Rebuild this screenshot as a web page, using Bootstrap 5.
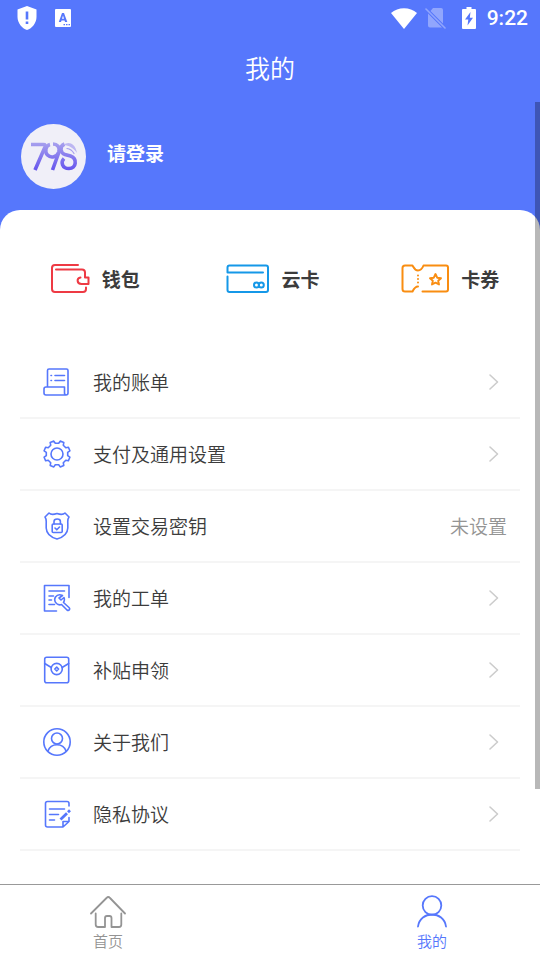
<!DOCTYPE html>
<html lang="zh-CN">
<head>
<meta charset="utf-8">
<meta name="viewport" content="width=device-width, initial-scale=1">
<title>我的</title>
<link href="https://cdn.jsdelivr.net/npm/bootstrap@5.3.0/dist/css/bootstrap.min.css" rel="stylesheet">
<style>
  :root { --brand: #5677fc; --ink: #3c3c3c; --muted-ink: #949494; }
  body { font-family: "Noto Sans CJK SC", sans-serif; color: var(--ink); background: #fff; }
  svg { display: block; flex: none; fill: none; stroke: currentColor; stroke-linecap: round; stroke-linejoin: round; }
  svg .solid { fill: currentColor; stroke: none; }
  a { color: inherit; text-decoration: none; }
  .brand-area { background: var(--brand); color: #fff; }
  .status-bar { height: 36px; padding: 0 12px 0 17px; }
  .clock { font: 500 21px/36px Roboto, sans-serif; margin-left: 11px; }
  .page-title { font-size: 25px; line-height: 62px; font-weight: 350; }
  .profile { padding: 26px 21px 41px; gap: 21px; }
  .sign-in { font-size: 19px; line-height: 28px; margin-bottom: 8px; }
  .sheet { margin-top: -20px; border-radius: 20px 20px 0 0; background: #fff; }
  .shortcuts { padding: 52px 0 52px 1px; }
  .shortcut { gap: 12px; font-size: 19px; line-height: 33px; }
  .menu { padding: 0 20px; }
  .menu-row { height: 72px; padding: 0 20px 0 23px; border-bottom: 2px solid #f5f5f5; font-size: 19px; line-height: 28px; font-weight: 350; }
  .menu-row svg:first-child { color: var(--brand); margin-right: 22px; stroke-width: 1.6; }
  .menu-row .chev { color: #ccc; stroke-width: 1.6; }
  .row-note { color: var(--muted-ink); margin-right: -7px; }
  .tabs { border-top: 1px solid #999; background: #fff; padding: 10px 0 8px; min-height: 76px; }
  .tab { width: 40%; font-size: 15px; line-height: 20px; color: var(--muted-ink); gap: 3px; font-weight: 350; }
  .tab.active { color: var(--brand); }
  .thumb { width: 5px; top: 102px; bottom: 171px; right: 0; background: rgba(0,0,0,.28); }
</style>
<script src="https://cdn.jsdelivr.net/npm/bootstrap@5.3.0/dist/js/bootstrap.bundle.min.js"></script>
</head>
<body>
<div class="d-flex flex-column min-vh-100 position-relative">
  <header class="brand-area">
    <div class="status-bar d-flex align-items-center justify-content-between">
      <div class="d-flex align-items-center">
        <svg width="20" height="24" viewBox="0 0 20 24"><path class="solid" fill-rule="evenodd" d="M10 0 L19.5 3.5 V11 C19.5 17 15 22.500 10 24 C5 22.500.5 17 .5 11 V3.500 Z M8.700 5.500 V13.500 H11.300 V5.500 Z M8.700 15.500 V18 H11.300 V15.500 Z"/></svg>
        <svg class="ms-3" width="20" height="18" viewBox="-2 0 20 18"><path class="solid" fill-rule="evenodd" d="M1 0 H15 Q16 0 16 1 V17 Q16 18 15 18 H1 Q0 18 0 17 V1 Q0 0 1 0 Z M7 4 L3.800 13 H6 L6.500 11.400 H9.500 L10.100 13 H12.300 L9 4 Z M8 6.500 L9 9.700 H7 Z M8.500 15 V16.300 H10 V15 Z M11 15 V16.300 H12.500 V15 Z M13.500 15 V16.300 H15 V15 Z"/></svg>
      </div>
      <div class="d-flex align-items-center">
        <svg width="26" height="21" viewBox="0 0 26 21"><path class="solid" d="M13 21 L0 5 C7-1.500 19-1.500 26 5 Z"/></svg>
        <svg class="ms-2" width="21" height="22" viewBox="0 0 21 22" opacity=".35"><path class="solid" d="M8 1 H16 Q18 1 18 3 V16.500 L5.500 4 Z M3 6.500 L17 20.500 H5 Q3 20.500 3 18.500 Z"/><path d="M1 2 L20 21" stroke-width="1.600"/></svg>
        <svg class="ms-3" width="14" height="22" viewBox="0 0 14 22"><path class="solid" fill-rule="evenodd" d="M4.500 0 H9.500 V2 H13 Q14 2 14 3 V21 Q14 22 13 22 H1 Q0 22 0 21 V3 Q0 2 1 2 H4.500 Z M8.500 5 L3 12.500 H6.300 L5.500 18.500 L11 10.800 H7.800 Z"/></svg>
        <span class="clock">9:22</span>
      </div>
    </div>
    <h1 class="page-title text-center mb-0">我的</h1>
    <div class="profile d-flex align-items-center">
      <svg width="65" height="65" viewBox="0 0 65 65" role="img" aria-label="798">
        <defs>
          <linearGradient id="ribbon" x1="0" y1="18" x2="0" y2="46" gradientUnits="userSpaceOnUse"><stop offset="0" stop-color="#a9a2ee"/><stop offset="1" stop-color="#6655ee"/></linearGradient>
        </defs>
        <circle cx="32.500" cy="32.500" r="32.500" fill="#f0eff8" stroke="none"/>
        <g stroke="url(#ribbon)" stroke-width="3.600" stroke-linecap="butt">
          <path d="M10 20.500 H22.500 Q25 20.500 24 23 L14 46"/>
          <path d="M29 20.500 C24.500 21.500 23.500 28 26.500 31 C30 34.500 36 33 37.800 28 C39.300 23 36 20 32 20 M38 28 L31.500 46"/>
          <path d="M43.500 20 C38 22.500 39.500 29 44 30.500 L49.500 32 C56.500 34.500 55.500 44.500 48 44.500 C41 44.500 39.500 38 43 34.500"/>
        </g>
        <path d="M43 21 C46 17.500 54 18 56 29 C52 23.500 48 21.500 43 21 Z" fill="#bdb6f2" stroke="none"/>
        <path d="M46 24.500 Q50.500 25 53 29.500" stroke="#a79eee" stroke-width="1.200"/>
      </svg>
      <a href="#" class="sign-in fw-bold">请登录</a>
    </div>
  </header>

  <main class="sheet flex-grow-1">
    <nav class="shortcuts row g-0" aria-label="快捷入口">
      <a href="#" class="shortcut col-4 d-flex justify-content-center align-items-center fw-bold">
        <svg width="48" height="32" viewBox="0 0 48 32" stroke-width="2" style="color:#ee3a44"><path d="M36 2 H13 Q10 2 10 5 V26 Q10 29 13 29 H41 Q44 29 44 26 V24.500 M14 6.500 H40 Q43 6.500 43 9.500 V14.500 H46.500 V21 H39.500 C34.500 21 34.500 15 38.500 14.500"/></svg>
        <span>钱包</span>
      </a>
      <a href="#" class="shortcut col-4 d-flex justify-content-center align-items-center fw-bold">
        <svg width="48" height="32" viewBox="0 0 48 32" stroke-width="2" style="color:#1598e8"><path d="M42 9.500 H6.500 V4.500 Q6.500 2.500 8.500 2.500 H45 Q47 2.500 47 4.500 V27 Q47 29 45 29 H8.500 Q6.500 29 6.500 27 V13.500"/><circle cx="35.500" cy="22" r="2.500"/><circle cx="40.300" cy="22" r="2.500"/></svg>
        <span>云卡</span>
      </a>
      <a href="#" class="shortcut col-4 d-flex justify-content-center align-items-center fw-bold">
        <svg width="48" height="32" viewBox="0 0 48 32" stroke-width="2" style="color:#f98d11"><path d="M21.500 28.500 H45 Q47 28.500 47 26.500 V4.500 Q47 2.500 45 2.500 H22.500 C21.500 5 20 7.500 17 7.500 S13 5 11.500 2.500 H4 Q1.500 2.500 1.500 5 V26 Q1.500 28.500 4 28.500 H11.500 C13 25.500 14.500 23.500 17 23.500 M17 12.500 V12.600 M17 16 V16.100 M17 19.500 V19.600"/><path stroke-width="1.900" d="M34.500 11 L36.200 14.700 L40 15.200 L37.200 17.800 L38 21.500 L34.500 19.600 L31 21.500 L31.800 17.800 L29 15.200 L32.800 14.700 Z"/></svg>
        <span>卡券</span>
      </a>
    </nav>

    <nav class="menu" aria-label="功能列表">
      <a href="#" class="menu-row d-flex align-items-center">
        <svg width="28" height="28" viewBox="0 0 28 28"><path d="M4.500 19 V2.500 Q4.500 1 6 1 H23.500 Q25 1 25 2.500 V25 Q25 27 23 27 H3 Q1 27 1 25 V21 Q1 19 3 19 H21.500 V25 Q21.500 27 23.500 27 M12 7.500 H21.500 M12 12.500 H21.500 M8 7.500 H8.500 M8 12.500 H8.500"/></svg>
        <span>我的账单</span>
        <svg class="chev ms-auto" width="14" height="18" viewBox="0 0 14 18"><path d="M4 2 L11.500 9 L4 16"/></svg>
      </a>
      <a href="#" class="menu-row d-flex align-items-center">
        <svg width="28" height="28" viewBox="0 0 28 28"><path d="M24.700 12.300V15.700L26.900 17.200L25.400 20.800L22.800 20.300L20.300 22.800L20.800 25.400L17.200 26.900L15.700 24.700H12.300L10.800 26.900L7.200 25.400L7.700 22.800L5.200 20.300L2.600 20.800L1.100 17.200L3.300 15.700V12.300L1.100 10.800L2.600 7.200L5.200 7.700L7.700 5.200L7.200 2.600L10.800 1.100L12.300 3.300H15.700L17.200 1.100L20.800 2.600L20.300 5.200L22.800 7.700L25.400 7.200L26.900 10.800Z"/><circle cx="14" cy="14" r="6"/></svg>
        <span>支付及通用设置</span>
        <svg class="chev ms-auto" width="14" height="18" viewBox="0 0 14 18"><path d="M4 2 L11.500 9 L4 16"/></svg>
      </a>
      <a href="#" class="menu-row d-flex align-items-center">
        <svg width="28" height="28" viewBox="0 0 28 28"><path d="M6 1 C8 3 11 2.500 14 1.500 C17 2.500 20 3 22 1 L26 5 Q24.500 7 24.800 11 V16 Q24.500 24 14 27 Q3.500 24 3.200 16 V11 Q3.500 7 2 5 Z"/><rect x="9.200" y="12" width="10" height="8.500" rx="1"/><path d="M11 12 V9.500 Q11 7 14.200 7 T17.400 9.500 V12 M12 16 L13.800 17.800 L16.500 15"/></svg>
        <span>设置交易密钥</span>
        <span class="row-note ms-auto">未设置</span>
      </a>
      <a href="#" class="menu-row d-flex align-items-center">
        <svg width="28" height="28" viewBox="0 0 28 28"><path d="M13.500 27 H1.500 V1.500 H26 V13.500 M6 7 H21.500 M6 12 H10.500 M6 16 H8.500 M6 20.500 H11.500 M19.500 11.500 Q15 9.500 12.500 13 Q10.500 16.500 13.500 19.500 Q16 21.500 18.500 20.500 L24 26 Q25.500 27 26.500 25.500 Q27 24.500 26 23.500 L20.500 18.500 Q22 16 21 13.500 L18 16 L16 14 Z"/></svg>
        <span>我的工单</span>
        <svg class="chev ms-auto" width="14" height="18" viewBox="0 0 14 18"><path d="M4 2 L11.500 9 L4 16"/></svg>
      </a>
      <a href="#" class="menu-row d-flex align-items-center">
        <svg width="28" height="28" viewBox="0 0 28 28"><rect x="1.700" y="1.200" width="24" height="25.600" rx="2"/><circle cx="13.700" cy="13" r="5.600"/><path d="M1.700 7.500 L8.300 11.500 M25.700 7.500 L19.100 11.500 M13.700 11.200 L15.600 13 L13.700 14.800 L11.800 13 Z"/></svg>
        <span>补贴申领</span>
        <svg class="chev ms-auto" width="14" height="18" viewBox="0 0 14 18"><path d="M4 2 L11.500 9 L4 16"/></svg>
      </a>
      <a href="#" class="menu-row d-flex align-items-center">
        <svg width="28" height="28" viewBox="0 0 28 28"><circle cx="14" cy="14" r="13.200"/><circle cx="14" cy="10.500" r="5.500"/><path d="M5 23 C6.500 18.500 9.500 16.700 14 16.700 S21.500 18.500 23 23"/></svg>
        <span>关于我们</span>
        <svg class="chev ms-auto" width="14" height="18" viewBox="0 0 14 18"><path d="M4 2 L11.500 9 L4 16"/></svg>
      </a>
      <a href="#" class="menu-row d-flex align-items-center">
        <svg width="28" height="28" viewBox="0 0 28 28"><path d="M26 6 V3.500 Q26 1.500 24 1.500 H4.500 Q2.500 1.500 2.500 3.500 V25 Q2.500 27 4.500 27 H20 L26 21.500 V17.500 M20 27 V21.500 H26 M6.500 9 H21.500 M6.500 14.500 H15.500 M6.500 20 H11.500"/><path stroke-width="2.800" stroke-linecap="butt" d="M17.500 19.500 L24 13.200 M25 12.200 L27 10.300"/></svg>
        <span>隐私协议</span>
        <svg class="chev ms-auto" width="14" height="18" viewBox="0 0 14 18"><path d="M4 2 L11.500 9 L4 16"/></svg>
      </a>
    </nav>
  </main>

  <footer class="tabs d-flex justify-content-between">
    <a href="#" class="tab d-flex flex-column align-items-center">
      <svg width="36" height="33" viewBox="0 0 36 33" stroke-width="1.800"><path d="M1 18.500 L16.500 3 Q18.300 1 20 3 L35 18.500 M5.700 18.500 V29.500 Q5.700 32 8.200 32 H15 V23 Q15 21 17 21 H19.500 Q21.500 21 21.500 23 V32 H29 Q31.300 32 31.300 29.500 V18.500"/></svg>
      <span>首页</span>
    </a>
    <a href="#" class="tab active d-flex flex-column align-items-center" aria-current="page">
      <svg width="36" height="33" viewBox="0 0 36 33" stroke-width="1.800"><circle cx="18" cy="10.500" r="9.300"/><path d="M4 31.500 C6 15.500 30 15.500 32 31.500"/></svg>
      <span>我的</span>
    </a>
  </footer>
  <div class="thumb position-absolute"></div>
</div>
</body>
</html>
